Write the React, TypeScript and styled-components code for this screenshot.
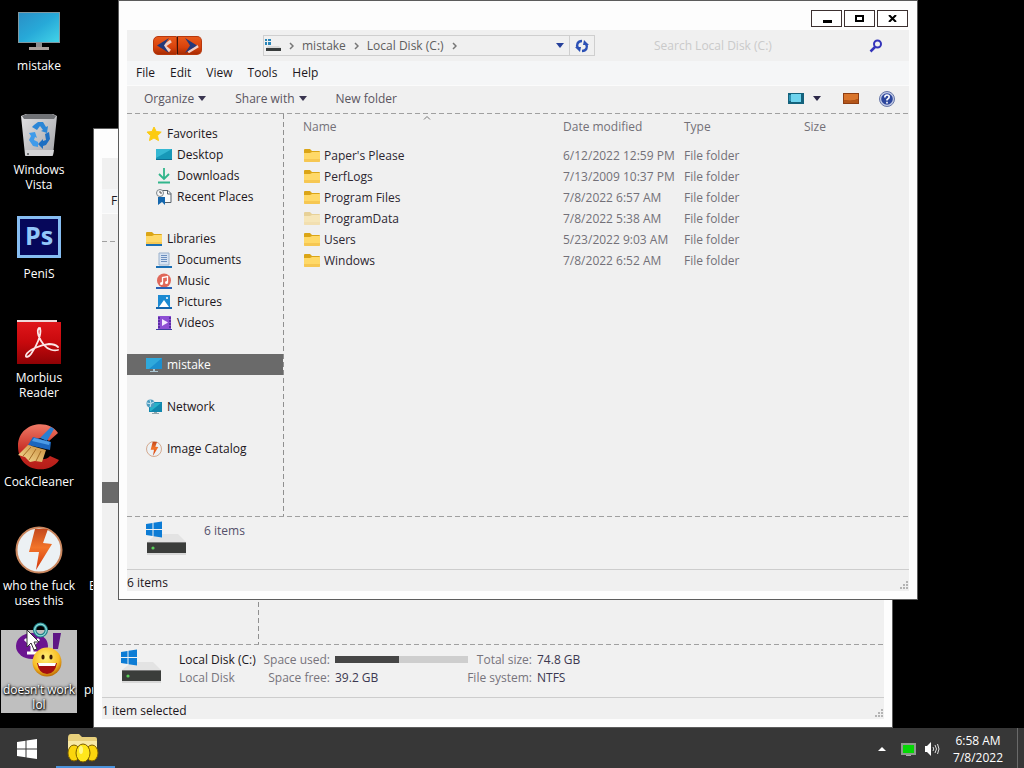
import React from 'react';
import styled, { createGlobalStyle } from 'styled-components';

const GlobalStyle = createGlobalStyle`
  * { box-sizing: border-box; }
  html, body { margin: 0; height: 100%; }
  body {
    background: #000;
    font: 12px/15px "Open Sans", "Noto Sans", sans-serif;
    color: #1c1620;
    overflow: hidden;
  }
  button, input { font: inherit; color: inherit; background: none; border: 0; padding: 0; margin: 0; }
  a { color: inherit; text-decoration: none; }
  svg { display: block; flex: none; }
`;

const dashX = 'repeating-linear-gradient(90deg, #a0a0a0 0 5px, transparent 5px 8px)';
const dashY = 'repeating-linear-gradient(180deg, #909090 0 5px, transparent 5px 8px)';

/* ---------- shell ---------- */

const Screen = styled.div`
  height: 100vh;
  display: flex;
  flex-direction: column;
`;

const Desktop = styled.main`
  flex: 1;
  min-height: 0;
  position: relative;
  background: #000;
`;

const IconGrid = styled.div`
  display: grid;
  grid-template-columns: 76px 60px;
  grid-auto-rows: 104px;
  align-items: start;
  column-gap: 7px;
  padding: 6px 0 0 1px;
`;

const Shortcut = styled.button<{ $selected?: boolean }>`
  grid-column: 1;
  display: flex;
  flex-direction: column;
  align-items: center;
  width: 76px;
  padding-bottom: 1px;
  color: #fff;
  background: ${p => (p.$selected ? '#bfbfbf' : 'transparent')};
  text-shadow: ${p => (p.$selected ? '1px 1px 2px #000, 0 0 3px #000, 0 1px 2px #000' : 'none')};
`;

const ShortcutArt = styled.span`
  height: 52px;
  display: flex;
  align-items: flex-start;
`;

const HiddenShortcut = styled.button<{ $row: number; $indent: number }>`
  grid-column: 2;
  grid-row: ${p => p.$row};
  padding: 52px 0 0 ${p => p.$indent}px;
  text-align: left;
  color: #fff;
`;

const Pointer = styled.div`
  position: absolute;
  left: 26px;
  top: 622px;
  pointer-events: none;
`;

/* ---------- window ---------- */

const Frame = styled.section<{ $front?: boolean }>`
  position: absolute;
  left: ${p => (p.$front ? 118 : 93)}px;
  right: ${p => (p.$front ? 106 : 131)}px;
  top: ${p => (p.$front ? 0 : 128)}px;
  bottom: ${p => (p.$front ? 128 : 0)}px;
  display: flex;
  flex-direction: column;
  padding: 0 8px 8px;
  border: 1px solid #5c5c5c;
  background: #fdfdfd;
`;

const TitleBar = styled.header`
  height: 29px;
  flex: none;
  display: flex;
  justify-content: flex-end;
  align-items: flex-end;
  gap: 2px;
  padding: 0 1px 3px 0;
`;

const TitleButton = styled.button`
  width: 31px;
  height: 17px;
  border: 1px solid #3c3030;
  background: #fff;
  display: flex;
  align-items: center;
  justify-content: center;
`;

const AddressRow = styled.div`
  height: 31px;
  flex: none;
  display: flex;
  align-items: center;
  padding: 0 23px 0 26px;
  background: #f0f0f0;
`;

const NavButtons = styled.div`
  display: flex;
  margin-right: 61px;
`;

const NavButton = styled.button<{ $forward?: boolean }>`
  width: ${p => (p.$forward ? 25 : 24)}px;
  height: 19px;
  margin-bottom: 1px;
  background: linear-gradient(#e85a1c, #d8420c 60%, #a82c04);
  border: 1px solid #b8380c;
  border-radius: ${p => (p.$forward ? '0 5px 5px 0' : '5px 0 0 5px')};
  border-left-color: ${p => (p.$forward ? '#3a1206' : '#b8380c')};
  display: flex;
  align-items: center;
  justify-content: center;
`;

const AddressBar = styled.div`
  flex: 1;
  height: 21px;
  display: flex;
  align-items: center;
  border: 1px solid #cfcfcf;
  padding-left: 1px;
  color: #5e5e5e;
`;

const Crumbs = styled.nav`
  flex: 1;
  display: flex;
  align-items: center;
  gap: 8px;
  white-space: nowrap;
`;

const AddressButton = styled.button<{ $divided?: boolean }>`
  width: ${p => (p.$divided ? 25 : 19)}px;
  height: 19px;
  border-left: ${p => (p.$divided ? '1px solid #cfcfcf' : '0')};
  display: flex;
  align-items: center;
  justify-content: center;
`;

const SearchBox = styled.label`
  width: 232px;
  margin-left: 59px;
  display: flex;
  align-items: center;
  justify-content: space-between;
`;

const SearchInput = styled.input`
  width: 180px;
  outline: none;
  &::placeholder { color: #cacaca; opacity: 1; }
`;

const MenuBar = styled.nav`
  height: 25px;
  flex: none;
  display: flex;
  align-items: center;
  gap: 15px;
  padding: 0 0 1px 9px;
  background: #f5f6f7;
  border-bottom: 1px solid #fbfbfb;
`;

const Toolbar = styled.div`
  height: 27px;
  flex: none;
  display: flex;
  align-items: center;
  padding: 0 14px 2px 17px;
  background: #f0f0f0;
  color: #5a5560;
`;

const ToolButton = styled.button`
  display: flex;
  align-items: center;
  gap: 4px;
  margin-right: 29px;
`;

const ToolIcons = styled.div`
  margin-left: auto;
  display: flex;
  align-items: center;
  gap: 20px;
`;

const ViewButtons = styled.div`
  display: flex;
  gap: 9px;
  align-items: center;
  padding-right: 2px;
`;

const DashedRule = styled.div`
  height: 1px;
  flex: none;
  background: ${dashX} #f0f0f0;
`;

const Body = styled.div`
  flex: 1;
  min-height: 0;
  display: flex;
  background: #f0f0f0;
`;

const Sidebar = styled.nav`
  width: 157px;
  flex: none;
  display: flex;
  flex-direction: column;
  gap: 21px;
  padding: 9px 1px 0 0;
  background: ${dashY} right / 1px 100% no-repeat;
`;

const NavGroup = styled.div<{ $first?: number }>`
  margin-top: ${p => p.$first || 0}px;
`;

const NavItem = styled.a<{ $level?: number; $active?: boolean }>`
  height: 21px;
  display: flex;
  align-items: center;
  gap: 5px;
  padding-left: ${p => (p.$level ? 29 : 19)}px;
  white-space: nowrap;
  background: ${p => (p.$active ? '#6a6a6a' : 'transparent')};
  color: ${p => (p.$active ? '#fff' : 'inherit')};
`;

const FileArea = styled.div`
  flex: 1;
  padding-left: 19px;
  position: relative;
`;

const SortMark = styled.svg`
  position: absolute;
  left: 139px;
  top: 1px;
`;

const FileTable = styled.table`
  width: 100%;
  table-layout: fixed;
  border-collapse: collapse;
  color: #737078;
`;

const HeadCell = styled.th<{ $width?: number }>`
  width: ${p => (p.$width ? p.$width + 'px' : 'auto')};
  height: 31px;
  padding: 0 0 6px;
  text-align: left;
  font-weight: 400;
`;

const Cell = styled.td`
  height: 21px;
  padding: 0;
  white-space: nowrap;
`;

const FileName = styled.span`
  display: flex;
  align-items: center;
  gap: 4px;
  padding-left: 1px;
  color: #2c2630;
`;

const Details = styled.footer`
  height: 52px;
  flex: none;
  display: flex;
  align-items: flex-start;
  gap: 17px;
  padding: 4px 0 0 19px;
  background: #f1f1f1;
`;

const ItemCount = styled.div`
  padding-top: 1px;
  line-height: 18px;
  color: #54506a;
`;

const DriveFacts = styled.dl`
  margin: 0;
  padding-top: 1px;
  display: grid;
  grid-template-columns: 82px 69px 138px 64px auto;
  grid-auto-rows: 18px;
  align-items: center;
  white-space: nowrap;
`;

const DriveName = styled.dt`
  color: #1c1620;
`;

const FactLabel = styled.dt<{ $left?: boolean }>`
  display: flex;
  justify-content: ${p => (p.$left ? 'flex-start' : 'flex-end')};
  color: #77747c;
`;

const FactValue = styled.dd`
  margin: 0 0 0 5px;
  color: #3c3850;
`;

const Meter = styled.div`
  width: 133px;
  height: 7px;
  background: #cecece;
`;

const MeterFill = styled.div`
  height: 100%;
  background: #464646;
`;

const StatusBar = styled.footer`
  height: 22px;
  flex: none;
  display: flex;
  align-items: center;
  justify-content: space-between;
  border-top: 1px solid #cdcdcd;
  background: #f0f0f0;
  padding: 3px 0 0;

  svg { align-self: flex-end; }
`;

/* ---------- taskbar ---------- */

const Taskbar = styled.footer`
  height: 40px;
  flex: none;
  display: flex;
  align-items: stretch;
  background: #373737;
  color: #fff;
`;

const StartButton = styled.button`
  width: 56px;
  display: flex;
  align-items: center;
  padding: 2px 0 0 17px;
`;

const TaskButton = styled.button`
  width: 59px;
  display: flex;
  justify-content: center;
  padding: 5px 6px 0 0;
  border-bottom: 2px solid #4b93dc;
`;

const Tray = styled.div`
  margin-left: auto;
  display: flex;
  align-items: center;
`;

const TrayButton = styled.button<{ $gap: number }>`
  margin-right: ${p => p.$gap}px;
  padding-top: 2px;
`;

const Clock = styled.time`
  text-align: center;
  line-height: 17px;
  padding-top: 2px;
  margin-right: 14px;
`;

const ShowDesktop = styled.button`
  width: 7px;
  height: 100%;
  border-left: 1px solid #6a6a6a;
`;

/* ---------- drawings ---------- */

const WindowsMark = ({ size, color }: { size: number; color: string }) => (
  <svg width={size} height={size} viewBox="0 0 20 20" fill={color}>
    <path d="M0 3 8.5 1.8V9.5H0zM9.5 1.6 20 0v9.5H9.5zM0 10.5h8.5v7.7L0 17zM9.5 10.5H20V20L9.5 18.4z" />
  </svg>
);

const MonitorArt = () => (
  <svg width="44" height="48" viewBox="0 0 44 48">
    <defs>
      <linearGradient id="scr" x1="0" y1="0" x2="1" y2="1">
        <stop offset="0" stopColor="#2a8fc6" /><stop offset=".5" stopColor="#27a9d8" /><stop offset="1" stopColor="#42d3e8" />
      </linearGradient>
    </defs>
    <path d="M1 6h42v31H1z" fill="#8298a0" />
    <path d="M2 7h40v29H2z" fill="url(#scr)" />
    <path d="M19 37h6v5h-6z" fill="#8d8d8d" /><path d="M12 41h20v3H12z" fill="#a9a19c" />
  </svg>
);

const BinArt = () => (
  <svg width="40" height="48" viewBox="0 0 40 48">
    <defs>
      <linearGradient id="bin" x1="0" y1="0" x2="1" y2="1">
        <stop offset="0" stopColor="#e2e2e4" /><stop offset="1" stopColor="#a3a4a8" />
      </linearGradient>
    </defs>
    <path d="M2 6 7 4h27l4 2-4 39q0 1-2 1H8q-2 0-2-1z" fill="url(#bin)" />
    <path d="M3 6 8 4h25l4 2-2 3H5z" fill="#707276" />
    <path d="M6 40h29l-1 5q0 1-2 1H8q-2 0-2-1z" fill="#d4d4d6" />
    <g fill="#2b86d6">
      <path d="m15 15 4-3h5l3 5 2-1-1 7-6-2 2-1-3-4-3 4-5-3z" />
      <path d="m10 23 6-1 2 6-2-1-1 3 4 2v5l-5-1-4-6 2-4z" fill="#3f9bea" />
      <path d="m26 24 4-2 1 7-4 6-3 1v3l-5-5 5-5v2l3-1z" fill="#1d6fc2" />
    </g>
    <circle cx="9" cy="44" r="1" fill="#555" />
  </svg>
);

const PsArt = () => (
  <svg width="44" height="48" viewBox="0 0 44 48">
    <path d="M0 2h44v42H0z" fill="#86bdf2" /><path d="M3 5h38v36H3z" fill="#06075a" />
    <text x="22" y="31" textAnchor="middle" fontFamily="Open Sans, sans-serif" fontWeight="700" fontSize="25" fill="#93c6f8">Ps</text>
  </svg>
);

const ReaderArt = () => (
  <svg width="44" height="48" viewBox="0 0 44 48">
    <defs>
      <linearGradient id="red" x1="0" y1="0" x2="0" y2="1">
        <stop offset="0" stopColor="#e2171b" /><stop offset=".5" stopColor="#c8090d" /><stop offset="1" stopColor="#8f0205" />
      </linearGradient>
    </defs>
    <path d="M0 2h40v2h4v42H0z" fill="url(#red)" /><path d="M0 2h40v2H0z" fill="#efd9d9" />
    <path d="M22 10c-3 3 0 11 5 17 4 5 10 6 14 5M23 10c2 7-4 19-9 26-2 3-6 4-5 1 2-5 14-10 23-11 4 0 7 1 9 3" fill="none" stroke="#fbe6e6" strokeWidth="1.800" strokeLinecap="round" />
  </svg>
);

const CleanerArt = () => (
  <svg width="46" height="48" viewBox="0 0 46 48">
    <defs>
      <linearGradient id="cc" x1="0" y1="0" x2="0" y2="1">
        <stop offset="0" stopColor="#f07a66" /><stop offset=".6" stopColor="#c52a22" /><stop offset="1" stopColor="#b51c18" />
      </linearGradient>
      <linearGradient id="bristle" x1="1" y1="0" x2="0" y2="1">
        <stop offset="0" stopColor="#c98d3c" /><stop offset="1" stopColor="#f6dc96" />
      </linearGradient>
    </defs>
    <path d="M42 11 33 19C28 13 15 16 15 26s13 15 19 8l9 4C34 53 2 51 2 24 2 0 33-4 42 11z" fill="url(#cc)" />
    <path d="m31 9 4-4 3 2-7 12-7-3z" fill="#2a7fd2" />
    <path d="m17 15 18 5-1 8-22-5z" fill="#1c66bd" /><path d="m18 16 16 4-1 3-17-4z" fill="#4c9be6" />
    <path d="m12 23 18 5-4 12-7-1-5 1-5-5-7-2z" fill="url(#bristle)" />
    <path d="m15 25-8 9m13-7-7 11m12-9-5 10" stroke="#a46c26" fill="none" />
  </svg>
);

const Bolt = ({ size }: { size: number }) => (
  <svg width={size} height={size} viewBox="0 0 48 48">
    <defs>
      <linearGradient id="blt" x1="0" y1="0" x2="0" y2="1">
        <stop offset="0" stopColor="#c4481c" /><stop offset=".45" stopColor="#f2742a" /><stop offset="1" stopColor="#d2350a" />
      </linearGradient>
    </defs>
    <circle cx="24" cy="24" r="22.5" fill="#ecf1f4" stroke="#c9865e" strokeWidth="2" />
    <path d="M20 3h13l-5 14 9 1-16 26 3-18H14z" fill="url(#blt)" />
  </svg>
);

const MessengerArt = () => (
  <svg width="48" height="48" viewBox="0 0 48 48">
    <defs>
      <radialGradient id="smile" cx=".45" cy=".35" r=".65">
        <stop offset="0" stopColor="#fff27a" /><stop offset=".7" stopColor="#f8bd24" /><stop offset="1" stopColor="#bd6c07" />
      </radialGradient>
    </defs>
    <ellipse cx="17" cy="16" rx="16" ry="13" fill="#6a1490" />
    <path d="m22 24 4 7-9-3z" fill="#6a1490" />
    <path d="M10 9l7 7 7-7m-7 7v7m-5 0h10" stroke="#fff" strokeWidth="3" fill="none" />
    <path d="M38 3h8l-3 16h-5z" fill="#5e1585" />
    <circle cx="32" cy="32" r="14.500" fill="url(#smile)" />
    <ellipse cx="28" cy="27" rx="1.600" ry="2.500" fill="#3c1c04" /><ellipse cx="36" cy="27" rx="1.600" ry="2.500" fill="#3c1c04" />
    <path d="M22 33h20q-2 11-10 11t-10-11z" fill="#a30e12" /><path d="M23 33h18l-1 3H24z" fill="#fff" />
  </svg>
);

const DriveArt = () => (
  <svg width="41" height="35" viewBox="0 0 41 35">
    <path d="M1 21 11 13h21l8 8z" fill="#e3e3e3" />
    <path d="M1 21h39v11H1z" fill="#3b3d3b" /><path d="M1 21h39v1H1z" fill="#7a7a7a" /><path d="M1 32h39v2H1z" fill="#d8d8d8" />
    <circle cx="7" cy="27" r="1.600" fill="#59d058" />
    <path d="M0 3 6.500 2v6H0zM7.500 1.800 16 .5V8H7.500zM0 9h6.500v6L0 14zM7.500 9H16v7.500l-8.500-1.300z" fill="#0c7cd5" />
  </svg>
);

const SmallDrive = () => (
  <svg width="16" height="14" viewBox="0 0 16 14">
    <path d="M0 0h2v2H0zM3 0h3v2H3zM0 3h2v3H0zM3 3h3v3H3z" fill="#2a86b8" />
    <path d="M3 7h11l2 2H1z" fill="#d9d9d9" /><path d="M1 9h15v3H1z" fill="#383c3c" />
  </svg>
);

const Chevron = () => (
  <svg width="5" height="8" viewBox="0 0 5 8" fill="none" stroke="#777" strokeWidth="1.5"><path d="m1 1 3 3-3 3" /></svg>
);

const Caret = ({ color }: { color: string }) => (
  <svg width="8" height="5" viewBox="0 0 8 5" fill={color}><path d="M0 0h8L4 5z" /></svg>
);

const FolderIcon = ({ faded, library }: { faded?: boolean; library?: boolean }) => (
  <svg width="16" height="16" viewBox="0 0 16 16" opacity={faded ? 0.4 : 1}>
    <path d="M0 2q0-1 1-1h5l2 2h7q1 0 1 1v3H0z" fill="#dba516" />
    <path d="M0 5h6l2-1h8v9q0 1-1 1H1q-1 0-1-1z" fill="#ffd968" /><path d="M0 11h16v2q0 1-1 1H1q-1 0-1-1z" fill="#f6c752" />
    {library && <path d="M0 13h16v2H0z" fill="#1a6fb5" />}
  </svg>
);

const Small = ({ children }: { children: React.ReactNode }) => (
  <svg width="16" height="16" viewBox="0 0 16 16">{children}</svg>
);

const icons: Record<string, React.ReactNode> = {
  star: <Small><path d="m8 1 2.200 4.500 5 .6-3.700 3.500 1 5L8 12l-4.500 2.600 1-5L1 6.100l5-.6z" fill="#fccb12" stroke="#fccb12" /></Small>,
  desktop: <Small><path d="M0 2h16v11H0z" fill="#1798b8" /><path d="M0 2h16L0 11z" fill="#35b8d3" /><path d="M0 12h16v1H0z" fill="#0d6e93" /></Small>,
  down: <Small><path d="M8 0v11M3 6l5 5 5-5M2 14.500h12" stroke="#31b58b" strokeWidth="1.800" fill="none" /></Small>,
  recent: <Small><path d="M6 1.500h6l3 3v9H8" fill="#fafafa" stroke="#57616a" /><path d="M11.500 1v4H15" fill="none" stroke="#57616a" /><circle cx="4" cy="4" r="3.500" fill="#f5f5f5" stroke="#7d868c" /><path d="M4 2v2h2" stroke="#555" fill="none" /><path d="M2 8h7v8l-3-3-4 3z" fill="#1467ae" /></Small>,
  library: <FolderIcon library />,
  documents: <Small><path d="M3 1h10v12H3z" fill="#d7e3f2" stroke="#9cb2cc" /><path d="M5 3.500h3m-3 2h6m-6 2h6m-6 2h6m-3-6h3" stroke="#6c8fbf" /><path d="M0 14h16v2H0z" fill="#1a6fb5" /></Small>,
  music: <Small><circle cx="8" cy="7.500" r="7" fill="#e0685a" /><path d="M6.500 10.500v-6l5-1v6" stroke="#fff" strokeWidth="1.300" fill="none" /><circle cx="5.500" cy="10.500" r="1.500" fill="#fff" /><circle cx="10.500" cy="9.500" r="1.500" fill="#fff" /><path d="M0 14h16v2H0z" fill="#2860b5" /></Small>,
  pictures: <Small><path d="M2 1h12v13H2z" fill="#1c8ad2" /><path d="m3 13 5-7 5 7z" fill="#fff" /><circle cx="11" cy="4" r="1" fill="#fff" /><path d="M0 13h16v2H0z" fill="#1465ad" /></Small>,
  videos: <Small><path d="M2 1h13v13H2z" fill="#8e4fd4" /><path d="M3 2v11M14 2v11" stroke="#4c2496" strokeWidth="1.500" strokeDasharray="2 1" /><path d="m6 4 6 3.500L6 11z" fill="#f4eaff" /><path d="M0 14h16v1H0z" fill="#3b3e9f" /></Small>,
  computer: <Small><path d="M0 1h16v11H0z" fill="#1b8fcf" /><path d="M0 1h16L3 12H0z" fill="#2fa9dc" /><path d="M7 12h2v2h3v1H4v-1h3z" fill="#a9c5d2" /></Small>,
  network: <Small><path d="M3 3h13v10H3z" fill="#1287ad" /><path d="M4 4h11L5 12H4z" fill="#27b2c9" /><circle cx="4.500" cy="4.500" r="4" fill="#4d9cc0" /><path d="M1 4q3 2 7-1M4 1q2 3 0 7" stroke="#cde9f2" fill="none" /><path d="M8 13h3v1h2v1H6v-1h2z" fill="#8fa6ad" /></Small>,
  bolt: <Bolt size={16} />,
};

const TaskFolder = () => (
  <svg width="32" height="30" viewBox="0 0 32 30">
    <path d="M1 5q0-4 3-4h8l3 3h13q2 0 2 2v18H1z" fill="#e8d07c" /><path d="M1 8h29v15H1z" fill="#f8e9a6" />
    <g stroke="#7a5d00"><ellipse cx="7" cy="20" rx="6" ry="8" fill="#fbd50d" /><ellipse cx="25" cy="20" rx="6" ry="8" fill="#fbd50d" /><ellipse cx="16" cy="20" rx="7" ry="9" fill="#ffe71c" /></g>
    <ellipse cx="14" cy="17" rx="2" ry="4" fill="#fff78a" />
  </svg>
);

const Grip = () => (
  <svg width="12" height="12" viewBox="0 0 12 12" fill="#b4b4b4">
    <path d="M9 2h2v2H9zM9 5h2v2H9zM6 5h2v2H6zM9 8h2v2H9zM6 8h2v2H6zM3 8h2v2H3z" />
  </svg>
);

/* ---------- data ---------- */

const shortcuts = [
  { name: 'mistake', art: <MonitorArt /> },
  { name: 'Windows Vista', art: <BinArt /> },
  { name: 'PeniS', art: <PsArt /> },
  { name: 'Morbius Reader', art: <ReaderArt /> },
  { name: 'CockCleaner', art: <CleanerArt /> },
  { name: 'who the fuck uses this', art: <Bolt size={48} /> },
  { name: "doesn't work lol", art: <MessengerArt />, selected: true },
];

const places = [
  [['Favorites', 'star'], ['Desktop', 'desktop'], ['Downloads', 'down'], ['Recent Places', 'recent']],
  [['Libraries', 'library'], ['Documents', 'documents'], ['Music', 'music'], ['Pictures', 'pictures'], ['Videos', 'videos']],
  [['mistake', 'computer']],
  [['Network', 'network']],
  [['Image Catalog', 'bolt']],
];

const folders = [
  { name: "Paper's Please", date: '6/12/2022 12:59 PM' },
  { name: 'PerfLogs', date: '7/13/2009 10:37 PM' },
  { name: 'Program Files', date: '7/8/2022 6:57 AM' },
  { name: 'ProgramData', date: '7/8/2022 5:38 AM', hidden: true },
  { name: 'Users', date: '5/23/2022 9:03 AM' },
  { name: 'Windows', date: '7/8/2022 6:52 AM' },
];

const drive = { used: 48 };

/* ---------- windows ---------- */

const FrontWindow = () => (
  <Frame $front aria-label="Local Disk (C:)">
    <TitleBar>
      <TitleButton aria-label="Minimize"><svg width="10" height="8"><path d="M1 5h9v3H1z" /></svg></TitleButton>
      <TitleButton aria-label="Maximize"><svg width="9" height="7"><path d="M1 1h7v5H1z" fill="none" stroke="#000" strokeWidth="2" /></svg></TitleButton>
      <TitleButton aria-label="Close"><svg width="9" height="7"><path d="m1 0 7 7M8 0 1 7" stroke="#000" strokeWidth="2" /></svg></TitleButton>
    </TitleBar>
    <AddressRow>
      <NavButtons>
        <NavButton aria-label="Back"><svg width="18" height="15" viewBox="0 0 18 15"><path d="m15 3-7 5 6 5" stroke="#f0cfc6" strokeWidth="3" fill="none" /><path d="M13 0 1 7.500 13 15 8 7.500z" fill="#23387a" /></svg></NavButton>
        <NavButton $forward aria-label="Forward"><svg width="18" height="15" viewBox="0 0 18 15"><path d="m7 14 10-6" stroke="#f0cfc6" strokeWidth="3" fill="none" /><path d="m4 0 12 7.500L4 15l5-7.500z" fill="#23387a" /></svg></NavButton>
      </NavButtons>
      <AddressBar>
        <Crumbs aria-label="Path">
          <SmallDrive /><Chevron /><a href="#mistake">mistake</a><Chevron /><a href="#c">Local Disk (C:)</a><Chevron />
        </Crumbs>
        <AddressButton aria-label="Previous locations"><Caret color="#26409a" /></AddressButton>
        <AddressButton $divided aria-label="Refresh">
          <svg width="14" height="14" viewBox="0 0 14 14" fill="none" stroke="#2b50b5" strokeWidth="2.400">
            <path d="M7 2C2.500 2 1 6 3 9M7 12c4.500 0 6-4 4-7" />
            <path d="M0 8h6L5 13zM14 6H8l1-5z" fill="#2b50b5" stroke="none" />
          </svg>
        </AddressButton>
      </AddressBar>
      <SearchBox>
        <SearchInput type="search" aria-label="Search" placeholder="Search Local Disk (C:)" />
        <svg width="18" height="14" viewBox="0 0 18 14" fill="none" stroke="#3434ba" strokeWidth="2">
          <circle cx="9.500" cy="5" r="3.500" /><path d="m7 8-4.500 4.500" strokeWidth="2.500" />
        </svg>
      </SearchBox>
    </AddressRow>
    <MenuBar>
      {['File', 'Edit', 'View', 'Tools', 'Help'].map(m => <button key={m}>{m}</button>)}
    </MenuBar>
    <Toolbar>
      <ToolButton>Organize <Caret color="#3a3550" /></ToolButton>
      <ToolButton>Share with <Caret color="#3a3550" /></ToolButton>
      <ToolButton>New folder</ToolButton>
      <ToolIcons>
        <ViewButtons>
          <button aria-label="View"><svg width="16" height="11"><path d="M0 0h16v11H0z" fill="#14627c" /><path d="M3 1h10v8H3z" fill="#6ed4ee" /><path d="M1 2h2v6H1z" fill="#2b93b6" /></svg></button>
          <button aria-label="More views"><Caret color="#2c2848" /></button>
        </ViewButtons>
        <button aria-label="Preview pane"><svg width="16" height="11"><path d="M0 0h16v11H0z" fill="#8e3e12" /><path d="M1 1h14v5q-6 3-14 1z" fill="#d9752c" /><path d="M1 7q8 2 14-1v4H1z" fill="#b35519" /></svg></button>
        <button aria-label="Help"><svg width="16" height="16" viewBox="0 0 16 16"><circle cx="8" cy="8" r="7.500" fill="#c3cbe6" stroke="#6777a8" /><circle cx="8" cy="8" r="5.800" fill="#2c469c" /><path d="M5.800 6.400q0-2.400 2.200-2.400t2.200 2Q10.200 7.200 8 8.600V9.500M8 10.800v1.700" stroke="#fff" strokeWidth="1.600" fill="none" /></svg></button>
      </ToolIcons>
    </Toolbar>
    <DashedRule />
    <Body>
      <Sidebar>
        {places.map((group, g) => (
          <NavGroup key={g}>
            {group.map(([label, icon], i) => (
              <NavItem key={label} href={'#' + icon} $level={i ? 1 : 0} $active={icon === 'computer'}>{icons[icon]}{label}</NavItem>
            ))}
          </NavGroup>
        ))}
      </Sidebar>
      <FileArea>
        <SortMark width="8" height="5" viewBox="0 0 8 5" fill="none" stroke="#777"><path d="m1 4.500 3-3 3 3" /></SortMark>
        <FileTable>
          <thead>
            <tr>
              <HeadCell $width={260}>Name</HeadCell>
              <HeadCell $width={121}>Date modified</HeadCell>
              <HeadCell $width={120}>Type</HeadCell>
              <HeadCell>Size</HeadCell>
            </tr>
          </thead>
          <tbody>
            {folders.map(f => (
              <tr key={f.name}>
                <Cell><FileName><FolderIcon faded={f.hidden} />{f.name}</FileName></Cell>
                <Cell>{f.date}</Cell>
                <Cell>File folder</Cell>
                <Cell />
              </tr>
            ))}
          </tbody>
        </FileTable>
      </FileArea>
    </Body>
    <DashedRule />
    <Details>
      <DriveArt />
      <ItemCount>6 items</ItemCount>
    </Details>
    <StatusBar>6 items<Grip /></StatusBar>
  </Frame>
);

const BackWindow = () => (
  <Frame aria-label="Computer">
    <TitleBar />
    <AddressRow />
    <MenuBar><button>File</button></MenuBar>
    <Toolbar />
    <DashedRule />
    <Body>
      <Sidebar>
        <NavGroup $first={231}><NavItem href="#computer" $active /></NavGroup>
      </Sidebar>
    </Body>
    <DashedRule />
    <Details>
      <DriveArt />
      <DriveFacts>
        <DriveName>Local Disk (C:)</DriveName>
        <FactLabel>Space used:</FactLabel>
        <FactValue>
          <Meter role="meter" aria-label="Space used" aria-valuenow={drive.used}>
            <MeterFill style={{ width: drive.used + '%' }} />
          </Meter>
        </FactValue>
        <FactLabel>Total size:</FactLabel>
        <FactValue>74.8 GB</FactValue>
        <FactLabel $left>Local Disk</FactLabel>
        <FactLabel>Space free:</FactLabel>
        <FactValue>39.2 GB</FactValue>
        <FactLabel>File system:</FactLabel>
        <FactValue>NTFS</FactValue>
      </DriveFacts>
    </Details>
    <StatusBar>1 item selected<Grip /></StatusBar>
  </Frame>
);

export default function App() {
  return (
    <Screen>
      <GlobalStyle />
      <Desktop>
        <IconGrid>
          {shortcuts.map(s => (
            <Shortcut key={s.name} $selected={s.selected}>
              <ShortcutArt>{s.art}</ShortcutArt>
              {s.name}
            </Shortcut>
          ))}
          <HiddenShortcut $row={6} $indent={5}>E</HiddenShortcut>
          <HiddenShortcut $row={7} $indent={0}>pr</HiddenShortcut>
        </IconGrid>
        <BackWindow />
        <FrontWindow />
        <Pointer>
          <svg width="24" height="30" viewBox="0 0 24 30">
            <circle cx="14.500" cy="8" r="5.800" fill="none" stroke="#227f88" strokeWidth="3.500" />
            <circle cx="14.500" cy="8" r="5.800" fill="none" stroke="#8fe0da" strokeWidth="1.200" />
            <path d="M1 8v17l4-4 3 7 3-1-3-7h5z" fill="#fff" stroke="#333" />
          </svg>
        </Pointer>
      </Desktop>
      <Taskbar>
        <StartButton aria-label="Start"><WindowsMark size={20} color="#fff" /></StartButton>
        <TaskButton aria-label="File Explorer"><TaskFolder /></TaskButton>
        <Tray>
          <TrayButton $gap={15} aria-label="Show hidden icons"><svg width="8" height="4"><path d="M0 4h8L4 0z" fill="#fff" /></svg></TrayButton>
          <TrayButton $gap={9} aria-label="Network"><svg width="15" height="13"><path d="M0 0h15v12H0z" fill="#8f9a8f" /><path d="M2 2h11v8H2z" fill="#05d805" /><path d="M5 12h5v1H5z" fill="#aaa" /></svg></TrayButton>
          <TrayButton $gap={13} aria-label="Volume"><svg width="15" height="14" viewBox="0 0 15 14"><path d="M0 4h2l4-4v14l-4-4H0z" fill="#fff" /><path d="M8 5q1.500 2 0 4M10 3q3 4 0 8M12.500 2q3 5 0 10" stroke="#ddd" fill="none" /></svg></TrayButton>
          <Clock>6:58 AM<br />7/8/2022</Clock>
          <ShowDesktop aria-label="Show desktop" />
        </Tray>
      </Taskbar>
    </Screen>
  );
}
